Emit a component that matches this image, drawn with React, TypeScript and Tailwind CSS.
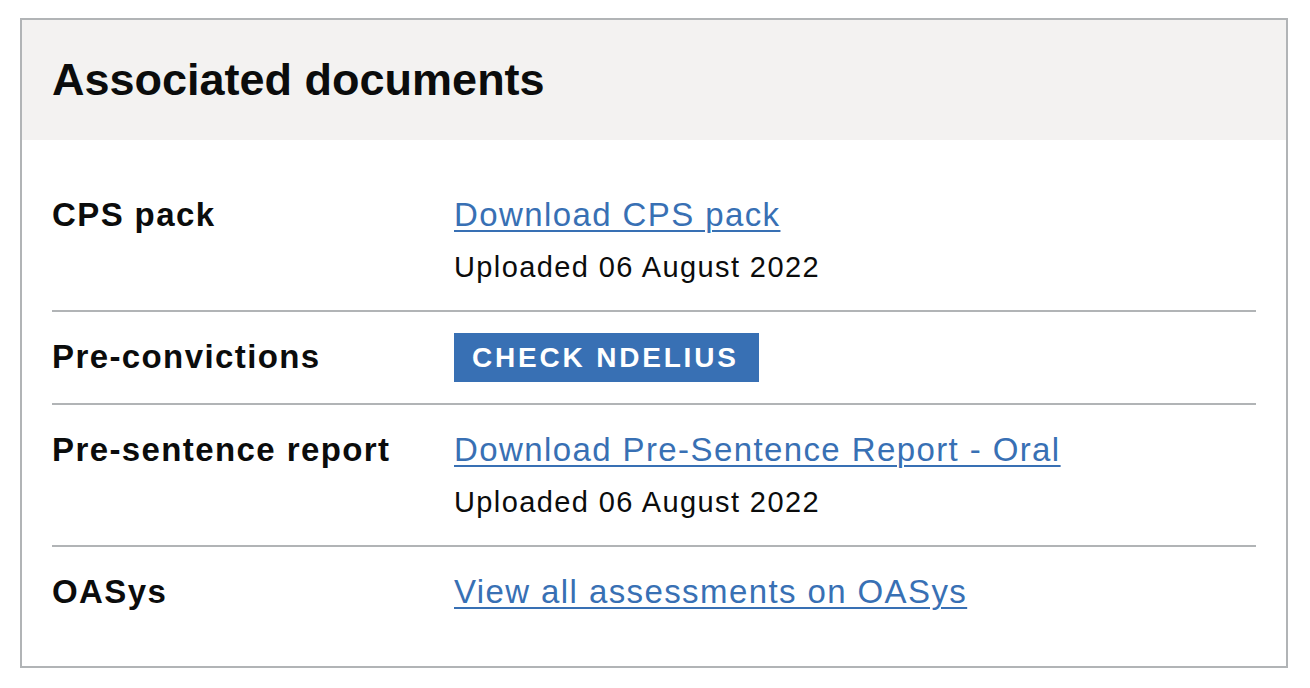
const rows = [
  {
    key: "CPS pack",
    link: "Download CPS pack",
    uploaded: "Uploaded 06 August 2022",
  },
  {
    key: "Pre-convictions",
    tag: "Check NDelius",
  },
  {
    key: "Pre-sentence report",
    link: "Download Pre-Sentence Report - Oral",
    uploaded: "Uploaded 06 August 2022",
  },
  {
    key: "OASys",
    link: "View all assessments on OASys",
  },
];

export default function App() {
  return (
    <div
      className="min-h-[688px] bg-white pt-[18px] pl-[20px] text-[#0b0c0c]"
      style={{ fontFamily: '"Liberation Sans", Arial, sans-serif' }}
    >
      <section className="w-[1268px] border-2 border-[#b1b4b6]">
        <div className="bg-[#f3f2f1] px-[30px] py-[32px]">
          <h2 className="text-[45px] font-bold leading-[56px]">Associated documents</h2>
        </div>
        <dl className="px-[30px] pt-[30px] pb-[28px]">
          {rows.map((row, i) => (
            <div
              key={row.key}
              className={
                "grid grid-cols-[402px_1fr] pt-[20px] pb-[21px] " +
                (i < rows.length - 1 ? "border-b-2 border-[#b1b4b6]" : "")
              }
            >
              <dt className="text-[33px] font-bold leading-[50px] tracking-[1.4px]">{row.key}</dt>
              <dd>
                {row.link && (
                  <a
                    href="#"
                    className="block w-fit text-[33px] leading-[50px] tracking-[1.4px] text-[#3870b4] underline decoration-2 underline-offset-[4px]"
                  >
                    {row.link}
                  </a>
                )}
                {row.tag && (
                  <strong className="mt-[1px] block h-[49px] w-fit bg-[#3870b4] pl-[18px] pr-[20px] text-[28px] font-bold uppercase leading-[49px] tracking-[2.8px] text-white">
                    {row.tag}
                  </strong>
                )}
                {row.uploaded && (
                  <p className="mt-[5px] text-[29px] leading-[44px] tracking-[1.4px]">{row.uploaded}</p>
                )}
              </dd>
            </div>
          ))}
        </dl>
      </section>
    </div>
  );
}
